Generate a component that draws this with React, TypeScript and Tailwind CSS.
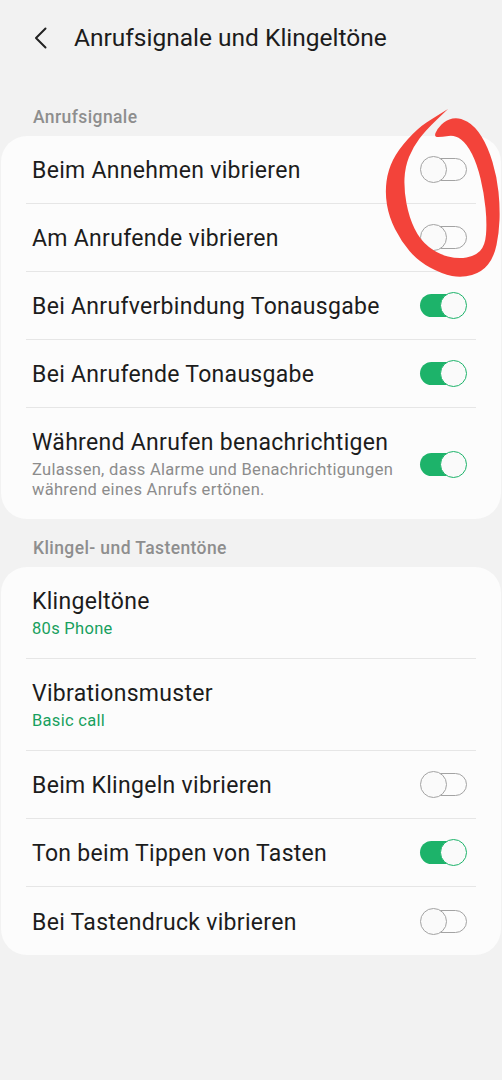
import React from "react"

type Row = {
  title: string
  sub?: string
  subGreen?: boolean
  toggle?: boolean
}

const callSignals: Row[] = [
  { title: "Beim Annehmen vibrieren", toggle: false },
  { title: "Am Anrufende vibrieren", toggle: false },
  { title: "Bei Anrufverbindung Tonausgabe", toggle: true },
  { title: "Bei Anrufende Tonausgabe", toggle: true },
  {
    title: "Während Anrufen benachrichtigen",
    sub: "Zulassen, dass Alarme und Benachrichtigungen während eines Anrufs ertönen.",
    toggle: true,
  },
]

const ringTones: Row[] = [
  { title: "Klingeltöne", sub: "80s Phone", subGreen: true },
  { title: "Vibrationsmuster", sub: "Basic call", subGreen: true },
  { title: "Beim Klingeln vibrieren", toggle: false },
  { title: "Ton beim Tippen von Tasten", toggle: true },
  { title: "Bei Tastendruck vibrieren", toggle: false },
]

function Toggle({ on }: { on: boolean }) {
  if (on) {
    return (
      <div className="relative h-[27px] w-[47px] shrink-0">
        <div className="absolute left-0 right-[2px] top-[2px] h-[23px] rounded-full bg-[#1db36a]" />
        <div className="absolute right-0 top-0 h-[27px] w-[27px] rounded-full border-[1.5px] border-[#1db36a] bg-[#fafafa]" />
      </div>
    )
  }
  return (
    <div className="relative h-[27px] w-[47px] shrink-0">
      <div className="absolute left-[2px] right-0 top-[2px] h-[23px] rounded-full border-[1.5px] border-[#a3a3a3]" />
      <div className="absolute left-0 top-0 h-[27px] w-[27px] rounded-full border-[1.5px] border-[#a3a3a3] bg-[#fafafa]" />
    </div>
  )
}

function SettingRow({ row, last }: { row: Row; last: boolean }) {
  const tall = !!row.sub
  return (
    <div
      className={`flex items-center ${last ? "" : "border-b border-[#e6e6e6]"} ${tall ? "pb-[19px] pt-[21px]" : "h-[68px]"}`}
    >
      <div className={`flex-1 pl-[6px] pr-4 ${tall ? "" : "pt-[3px]"}`}>
        <div className="text-[23px] leading-[28px] tracking-[0.3px] text-[#1c1c1c]">{row.title}</div>
        {row.sub && (
          <div
            className={`mt-[3px] text-[16.5px] leading-[20px] tracking-[0.3px] ${row.subGreen ? "text-[#18a05e]" : "text-[#8c8c8c]"}`}
          >
            {row.sub}
          </div>
        )}
      </div>
      {row.toggle !== undefined && (
        <div className="pr-[9px]">
          <Toggle on={row.toggle} />
        </div>
      )}
    </div>
  )
}

function Section({ label, rows, first }: { label: string; rows: Row[]; first?: boolean }) {
  return (
    <div className={first ? "" : "mt-[18px]"}>
      <div className="pl-[32px] text-[17.5px] font-medium leading-[22px] tracking-[0.4px] text-[#8e8e8e]">{label}</div>
      <div className="mt-[8px] rounded-[26px] bg-[#fcfcfc] px-[25px]">
        {rows.map((r, i) => (
          <SettingRow key={r.title} row={r} last={i === rows.length - 1} />
        ))}
      </div>
    </div>
  )
}

// smooth outline through the points (quadratic midpoints)
function smooth(pts: [number, number][]) {
  let d = `M${pts[0][0]} ${pts[0][1]}`
  for (let i = 1; i < pts.length - 1; i++) {
    const mx = (pts[i][0] + pts[i + 1][0]) / 2
    const my = (pts[i][1] + pts[i + 1][1]) / 2
    d += ` Q${pts[i][0]} ${pts[i][1]} ${mx} ${my}`
  }
  const l = pts[pts.length - 1]
  d += ` L${l[0]} ${l[1]} Z`
  return d
}

const ring: [number, number][] = [
  [448, 109],
  [435, 117],
  [418, 128],
  [398, 150],
  [388, 170],
  [385, 193],
  [389, 217],
  [401, 241],
  [418, 261],
  [442, 274],
  [462, 278],
  [482, 272],
  [494, 257],
  [499, 233],
  [500, 207],
  [497, 177],
  [488, 147],
  [475, 126],
  [459, 117],
  [446, 120],
  [437, 129],
  [434, 137],
  [442, 137],
  [455, 135],
  [467, 144],
  [477, 164],
  [484, 193],
  [487, 223],
  [485, 246],
  [475, 256],
  [458, 259],
  [438, 254],
  [420, 240],
  [409, 217],
  [404, 190],
  [405, 167],
  [413, 147],
  [426, 130],
  [448, 109],
]

export default function App() {
  return (
    <div
      className="relative min-h-[1080px] w-full bg-[#f2f2f2] pb-10"
      style={{ fontFamily: "Roboto, 'Noto Sans', sans-serif" }}
    >
      <header className="flex h-[76px] items-center pl-[34px]">
        <svg width="13" height="22" viewBox="0 0 13 22" className="shrink-0">
          <path
            d="M11.5 1.5 L2 11 L11.5 20.5"
            fill="none"
            stroke="#222"
            strokeWidth="2"
            strokeLinecap="round"
            strokeLinejoin="round"
          />
        </svg>
        <h1 className="ml-[27px] text-[24.5px] font-normal leading-none text-[#1c1c1c]">Anrufsignale und Klingeltöne</h1>
      </header>

      <main className="px-[1px] pt-[30px]">
        <Section label="Anrufsignale" rows={callSignals} first />
        <Section label="Klingel- und Tastentöne" rows={ringTones} />
      </main>

      <svg className="pointer-events-none absolute left-0 top-0" width="502" height="300" viewBox="0 0 502 300">
        <path d={smooth(ring)} fill="#f3433a" />
      </svg>
    </div>
  )
}
